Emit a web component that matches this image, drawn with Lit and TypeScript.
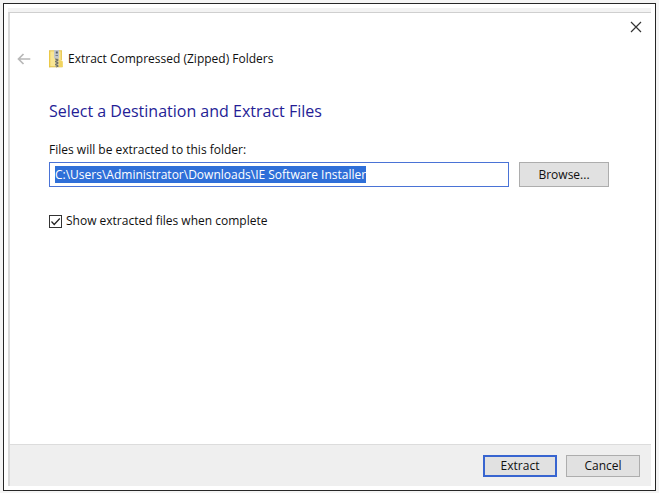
import { LitElement, html, css } from "lit";
import { customElement, query, state } from "lit/decorators.js";

@customElement("app-root")
export class AppRoot extends LitElement {
  static styles = css`
    :host {
      display: flex;
      box-sizing: border-box;
      min-height: 100vh;
      padding: 3px 3px 2px;
      background: #f4f4f4;
      color: #101010;
      font: 12px/18px "Open Sans", "Noto Sans", sans-serif;
    }
    * {
      box-sizing: border-box;
    }
    .frame {
      display: flex;
      flex: 1;
      padding: 4px;
      border: 1px solid #262626;
      background: #fff;
    }
    .dialog {
      display: flex;
      flex: 1;
      flex-direction: column;
      border-top: 4px solid #f3f3f3;
    }
    .inner {
      display: flex;
      flex: 1;
      flex-direction: column;
      border-top: 1px solid #cfcfcf;
      border-left: 2px solid #d8d8d8;
    }
    .titlebar {
      display: flex;
      justify-content: flex-end;
      padding: 6px 7px 0;
    }
    .icon-button {
      display: grid;
      place-items: center;
      width: 16px;
      height: 16px;
      padding: 0;
      border: 0;
      background: none;
    }
    .header {
      display: flex;
      align-items: center;
      padding: 15px 6px 0;
    }
    .folder {
      margin: 0 5px 0 17px;
    }
    .title {
      margin: 0;
      font: inherit;
    }
    .content {
      flex: 1;
      padding: 31px 42px 24px 39px;
    }
    .heading {
      margin: 0;
      color: #251d96;
      font-size: 16px;
      font-weight: 400;
      line-height: 24px;
    }
    .label {
      display: block;
      margin-top: 18px;
    }
    .row {
      display: flex;
      align-items: center;
      gap: 10px;
      margin-top: 3px;
    }
    .path {
      flex: 1;
      min-width: 0;
      height: 25px;
      padding: 0 5px;
      border: 1px solid #4a73d6;
      border-radius: 0;
      outline: none;
      background: #fff;
      color: inherit;
      font: inherit;
      line-height: 16px;
    }
    .path::selection {
      background: #2f6fd8;
      color: #fff;
    }
    .button {
      width: 74px;
      height: 22px;
      padding: 0;
      border: 1px solid #adadad;
      background: #e1e1e1;
      color: inherit;
      font: inherit;
    }
    .browse {
      width: 90px;
      height: 25px;
    }
    .primary {
      border: 2px solid #3865d0;
    }
    .check {
      display: flex;
      align-items: center;
      gap: 4px;
      width: fit-content;
      margin-top: 25px;
    }
    .box {
      position: relative;
      display: grid;
    }
    .tick {
      position: absolute;
      inset: 0;
      pointer-events: none;
    }
    .checkbox {
      appearance: none;
      width: 13px;
      height: 13px;
      margin: 0;
      border: 1px solid #333;
      background: #fff;
    }
    .footer {
      display: flex;
      justify-content: flex-end;
      gap: 9px;
      padding: 10px 11px 9px;
      border-top: 1px solid #dcdcdc;
      background: #efefef;
    }
  `;

  @state() private showFiles = true;
  @query(".path") private pathInput!: HTMLInputElement;

  firstUpdated() {
    this.pathInput.focus();
    this.pathInput.select();
  }

  private toggle(e: Event) {
    this.showFiles = (e.target as HTMLInputElement).checked;
  }

  render() {
    return html`
      <div class="frame">
        <div class="dialog" role="dialog" aria-labelledby="title">
          <div class="inner">
            <div class="titlebar">
              <button class="icon-button" aria-label="Close">
                <svg width="12" height="12" viewBox="0 0 12 12" fill="none" stroke="#333" stroke-width="1.2">
                  <path d="M1 1 11 11M11 1 1 11" />
                </svg>
              </button>
            </div>
            <header class="header">
              <button class="icon-button" aria-label="Back">
                <svg width="14" height="12" viewBox="0 0 14 12" fill="none" stroke="#b8b8b8" stroke-width="1.7">
                  <path d="M13.3 6H1.8M6.5 1 1.5 6l5 5" />
                </svg>
              </button>
              <svg class="folder" width="14" height="18" viewBox="0 0 14 18" aria-hidden="true">
                <path d="M0 1h12.5v9l1.2 1.5V17H0z" fill="#f9e694" />
                <path d="M0 .8h1.3v16.4H0z" fill="#ecc947" />
                <path d="M0 .8h5M9.5 .8H13M0 16.8h13.5" stroke="#e0c04a" />
                <path d="M11.7 1h1.2v9h-1.2z" fill="#e7c64c" />
                <path d="m10.2 10 3.5 1.5V17h-3.5z" fill="#f1d460" />
                <path d="M5 0h5v8l-1 1H6L5 8z" fill="#c3c7cb" />
                <path d="M6.8 1.5h2v2h-2z" fill="#555b63" />
                <path d="M6.5 5.5h2.5" stroke="#7b8086" />
                <path d="M7.8 8.5v8.5" stroke="#b9b193" stroke-width="3" />
                <path d="m6.3 9 3 1-3 1.5 3 1.5-3 1.5 3 1.5-2 1" fill="none" stroke="#686a65" />
              </svg>
              <h1 class="title" id="title">Extract Compressed (Zipped) Folders</h1>
            </header>
            <main class="content">
              <h2 class="heading">Select a Destination and Extract Files</h2>
              <label class="label" for="path">Files will be extracted to this folder:</label>
              <div class="row">
                <input
                  class="path"
                  id="path"
                  type="text"
                  spellcheck="false"
                  value="C:\\Users\\Administrator\\Downloads\\IE Software Installer"
                />
                <button class="button browse">Browse...</button>
              </div>
              <label class="check">
                <span class="box">
                  <input class="checkbox" type="checkbox" .checked=${this.showFiles} @change=${this.toggle} />
                  ${this.showFiles
                    ? html`<svg class="tick" width="13" height="13" viewBox="0 0 13 13" fill="none" stroke="#222" stroke-width="1.2">
                        <path d="m2.5 6.5 2.7 3L10.8 3.5" />
                      </svg>`
                    : null}
                </span>
                Show extracted files when complete
              </label>
            </main>
            <footer class="footer">
              <button class="button primary">Extract</button>
              <button class="button">Cancel</button>
            </footer>
          </div>
        </div>
      </div>
    `;
  }
}
